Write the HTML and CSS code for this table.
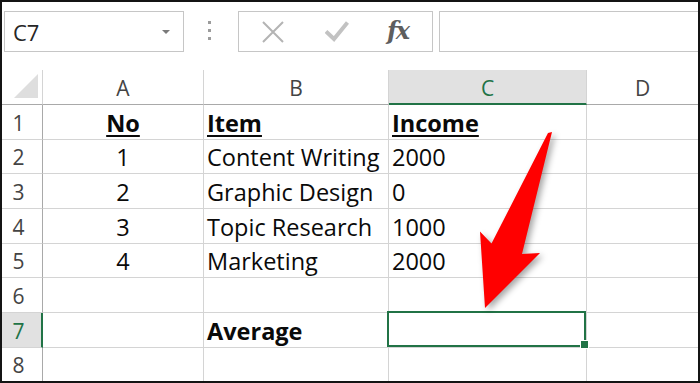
FILE: index.html
```html
<!DOCTYPE html>
<html>
<head>
<meta charset="utf-8">
<link rel="stylesheet" href="styles.css">
</head>
<body>
<div class="frame">
  <div class="toolbar">
    <div class="namebox"><span class="ref">C7</span><span class="dd"></span></div>
    <div class="grip"><i></i><i></i><i></i></div>
    <div class="fbtns">
      <svg class="ico" width="24" height="22" viewBox="0 0 24 22"><path d="M2 1 L22 21 M22 1 L2 21" stroke="#b4b4b4" stroke-width="2" fill="none"/></svg>
      <svg class="ico chk" width="24" height="22" viewBox="0 0 24 22"><path d="M1 11.5 L9 19 L22.5 2.5" stroke="#c2c2c2" stroke-width="4" fill="none" stroke-linejoin="miter"/></svg>
      <span class="fx">fx</span>
    </div>
    <div class="finput"></div>
  </div>
  <div class="sheet">
    <div class="corner"><svg width="26" height="26" viewBox="0 0 26 26"><path d="M25 1 L25 25 L1 25 Z" fill="#dedede"/></svg></div>
    <div class="ch">A</div>
    <div class="ch">B</div>
    <div class="ch active">C</div>
    <div class="ch last">D</div>

    <div class="rh">1</div>
    <div class="c ctr"><span class="b u">No</span></div>
    <div class="c"><span class="b u">Item</span></div>
    <div class="c"><span class="b u">Income</span></div>
    <div class="c last"></div>

    <div class="rh">2</div>
    <div class="c ctr">1</div>
    <div class="c">Content Writing</div>
    <div class="c">2000</div>
    <div class="c last"></div>

    <div class="rh">3</div>
    <div class="c ctr">2</div>
    <div class="c">Graphic Design</div>
    <div class="c">0</div>
    <div class="c last"></div>

    <div class="rh">4</div>
    <div class="c ctr">3</div>
    <div class="c">Topic Research</div>
    <div class="c">1000</div>
    <div class="c last"></div>

    <div class="rh">5</div>
    <div class="c ctr">4</div>
    <div class="c">Marketing</div>
    <div class="c">2000</div>
    <div class="c last"></div>

    <div class="rh">6</div>
    <div class="c"></div>
    <div class="c"></div>
    <div class="c"></div>
    <div class="c last"></div>

    <div class="rh active">7</div>
    <div class="c"></div>
    <div class="c"><span class="b">Average</span></div>
    <div class="c selcell"><div class="sel"><div class="handle"></div></div></div>
    <div class="c last"></div>

    <div class="rh end">8</div>
    <div class="c end"></div>
    <div class="c end"></div>
    <div class="c end"></div>
    <div class="c end last"></div>
  </div>
  <svg class="arrow" width="700" height="383" viewBox="0 0 700 383">
    <polygon points="548,133 552,132 522,254 540,253 485,308 480,231.5 491.5,243.5" fill="#ff0000"/>
  </svg>
</div>
</body>
</html>
```
FILE: styles.css
```css
body {
  margin: 0;
  background: #ffffff;
}
.frame {
  position: relative;
  width: 700px;
  height: 383px;
  box-sizing: border-box;
  border: 2px solid #141414;
  display: flex;
  flex-direction: column;
  overflow: hidden;
  background: #ffffff;
  font-family: "Open Sans", "Noto Sans", sans-serif;
}
.toolbar {
  flex: none;
  height: 68px;
  box-sizing: border-box;
  padding: 9px 0 0 2px;
  display: flex;
  align-items: flex-start;
}
.namebox {
  width: 180px;
  height: 41px;
  box-sizing: border-box;
  border: 1px solid #c6c6c6;
  display: flex;
  align-items: center;
  justify-content: space-between;
  padding: 0 13px 0 8px;
}
.ref {
  font-size: 22px;
  color: #262626;
  line-height: 1;
}
.dd {
  width: 0;
  height: 0;
  border-left: 4px solid transparent;
  border-right: 4px solid transparent;
  border-top: 4px solid #7a7a7a;
  margin-top: 1px;
}
.grip {
  margin: 10px 0 0 24px;
  width: 4px;
  display: flex;
  flex-direction: column;
  gap: 5px;
}
.grip i {
  display: block;
  width: 3px;
  height: 3px;
  background: #9c9c9c;
}
.fbtns {
  margin-left: 26px;
  width: 195px;
  height: 41px;
  box-sizing: border-box;
  border: 1px solid #c6c6c6;
  display: flex;
  align-items: center;
  padding-left: 22px;
}
.ico {
  display: block;
}
.chk {
  margin-left: 40px;
  margin-top: -1px;
}
.fx {
  margin-left: 38px;
  font-family: "DejaVu Serif", "Liberation Serif", serif;
  font-style: italic;
  font-weight: 700;
  font-size: 24px;
  letter-spacing: -1.5px;
  color: #5e5e5e;
  line-height: 1;
  margin-top: -1px;
}
.finput {
  margin-left: 6px;
  flex: 1;
  height: 41px;
  box-sizing: border-box;
  border: 1px solid #c6c6c6;
  border-right: none;
}
.sheet {
  flex: 1;
  display: grid;
  grid-template-columns: 41px 161px 185px 198px 1fr;
  grid-template-rows: 35px 35px 34px 35px 35px 34px 35px 35px 1fr;
}
.corner {
  border-right: 1px solid #d4d4d4;
  border-bottom: 1px solid #a9a9a9;
  display: flex;
  align-items: flex-end;
  justify-content: flex-end;
  padding: 0 3px 5px 0;
}
.corner svg {
  display: block;
}
.ch {
  border-right: 1px solid #d4d4d4;
  border-bottom: 1px solid #a9a9a9;
  display: flex;
  align-items: flex-end;
  justify-content: center;
  padding-bottom: 5px;
  font-size: 21px;
  line-height: 1;
  color: #444444;
}
.ch.active {
  background: #e1e1e1;
  border-bottom: 2px solid #217346;
  padding-bottom: 4px;
  color: #217346;
}
.rh {
  border-right: 1px solid #a9a9a9;
  border-bottom: 1px solid #d4d4d4;
  display: flex;
  align-items: flex-end;
  justify-content: center;
  padding: 0 7px 5px 0;
  font-size: 21px;
  line-height: 1;
  color: #444444;
}
.rh.active {
  background: #e1e1e1;
  border-right: 2px solid #217346;
  padding-right: 6px;
  color: #217346;
}
.c {
  border-right: 1px solid #d4d4d4;
  border-bottom: 1px solid #d4d4d4;
  display: flex;
  align-items: flex-end;
  padding: 0 0 4px 3px;
  font-size: 23.5px;
  line-height: 1;
  color: #0a0a0a;
  white-space: nowrap;
}
.c.ctr {
  justify-content: center;
  padding-left: 0;
}
.last {
  border-right: none;
}
.end {
  border-bottom: none;
}
.b {
  font-weight: 700;
}
.u {
  text-decoration: underline;
  text-decoration-thickness: 2px;
  text-underline-offset: 3px;
}
.selcell {
  position: relative;
}
.sel {
  position: absolute;
  top: -2px;
  left: -2px;
  right: 0;
  bottom: 0;
  border: 2px solid #217346;
}
.handle {
  position: absolute;
  right: -4px;
  bottom: -3px;
  width: 7px;
  height: 7px;
  background: #217346;
  box-shadow: 0 0 0 1px #ffffff;
}
.arrow {
  position: absolute;
  top: -2px;
  left: -2px;
  pointer-events: none;
  filter: drop-shadow(3px 3px 3px rgba(0, 0, 0, 0.35));
}
```
